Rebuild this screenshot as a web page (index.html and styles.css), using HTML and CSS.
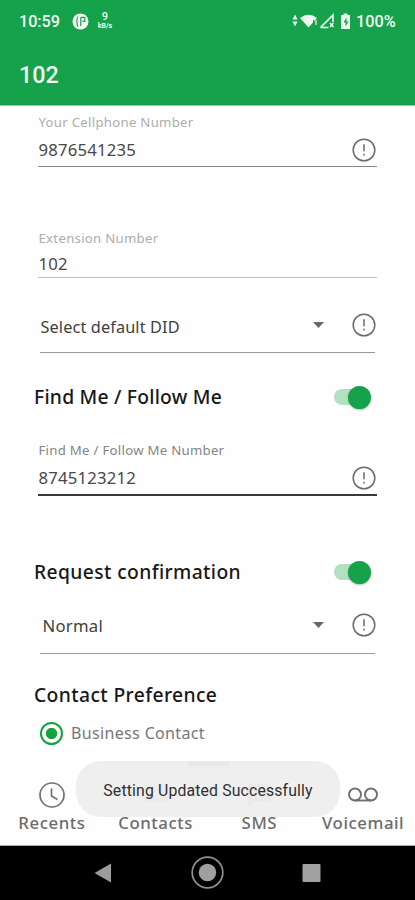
FILE: index.html
```html
<!DOCTYPE html>
<html lang="en">
<head>
<meta charset="utf-8">
<title>102</title>
<link rel="stylesheet" href="styles.css">
</head>
<body>
<svg class="defs" width="0" height="0">
  <symbol id="info" viewBox="0 0 24 24">
    <circle cx="12" cy="12" r="10.8" fill="none" stroke="#6c6c6c" stroke-width="1.5"/>
    <path d="M12 6.300v6.900M12 15.800v1.700" stroke="#606060" stroke-width="1.400"/>
  </symbol>
</svg>
<div class="screen">
  <header class="top">
    <div class="status">
      <span class="clock">10:59</span>
      <svg class="app-dot" width="17" height="17" viewBox="0 0 17 17"><circle cx="8.500" cy="8.500" r="8" fill="#f4fbf5"/><path d="M6 3.500c-1.500 2-1.500 8 0 10M8.800 13V4.300M8.800 4.300h4v4h-2.300" fill="none" stroke="#15a24a" stroke-width="1.200"/></svg>
      <span class="speed"><b>9</b><small>kB/s</small></span>
      <svg class="signals" width="62" height="18" viewBox="0 0 62 18" fill="#eefaf0">
        <path d="M0.500 7.500L3 2.500l2.500 5zM.5 9.500h5L3 14.500z"/>
        <path d="M8 6Q16.500 -0.500 25 6L16.500 15.500z"/>
        <path d="M21.500 8v7" stroke="#15a24a" stroke-width="1"/>
        <path d="M24 8v5" stroke="#eefaf0" stroke-width="1.200"/>
        <path d="M28.500 15.500L41 3v7M28.500 15.500h8" fill="none" stroke="#eefaf0" stroke-width="1.700"/>
        <path d="M38 11l3.500 4M41.500 11L38 15" stroke="#eefaf0" stroke-width="1.500"/>
        <path d="M49 3h2.500V1.500h4V3H58v14h-9z"/>
        <path d="M54.500 5.500L51.500 10.500h2v4l3-5h-2z" fill="#15a24a"/>
      </svg>
      <span class="battery">100%</span>
    </div>
    <h1 class="title">102</h1>
  </header>
  <main class="form">
    <section class="field cell">
      <label class="label pale">Your Cellphone Number</label>
      <div class="row"><span class="value">9876541235</span><svg class="info"><use href="#info"/></svg></div>
    </section>
    <section class="field ext">
      <label class="label pale">Extension Number</label>
      <div class="row"><span class="value">102</span></div>
    </section>
    <section class="select did">
      <span class="choice">Select default DID</span><i class="arrow"></i><svg class="info"><use href="#info"/></svg>
    </section>
    <section class="heading find"><h2>Find Me / Follow Me</h2><span class="toggle"><i></i></span></section>
    <section class="field follow">
      <label class="label">Find Me / Follow Me Number</label>
      <div class="row"><span class="value">8745123212</span><svg class="info"><use href="#info"/></svg></div>
    </section>
    <section class="heading request"><h2>Request confirmation</h2><span class="toggle"><i></i></span></section>
    <section class="select normal">
      <span class="choice">Normal</span><i class="arrow"></i><svg class="info"><use href="#info"/></svg>
    </section>
    <section class="heading pref"><h2>Contact Preference</h2></section>
    <section class="option"><span class="radio"></span><span>Business Contact</span></section>
  </main>
  <nav class="tabs">
    <div class="tab"><svg width="28" height="28" viewBox="0 0 28 28" fill="none" stroke="#737373" stroke-width="1.700"><circle cx="14" cy="15" r="12"/><path d="M13.500 8.500v7.500l6 3.500"/></svg><span>Recents</span></div>
    <div class="tab"><svg width="28" height="28" viewBox="0 0 28 28" fill="#737373"><circle cx="10" cy="9" r="4"/><circle cx="19" cy="9" r="4"/><path d="M2 22c0-9 16-9 16 0zM19 22h7c0-5-4-7-8-6.500z"/></svg><span>Contacts</span></div>
    <div class="tab"><svg width="28" height="28" viewBox="0 0 28 28" fill="#737373"><path d="M3 4h23v17H8l-5 5z"/></svg><span>SMS</span></div>
    <div class="tab"><svg width="32" height="28" viewBox="0 0 32 28" fill="none" stroke="#707070" stroke-width="1.900"><circle cx="8" cy="14.500" r="6"/><circle cx="24" cy="14.500" r="6"/><path d="M8 20.500h16"/></svg><span>Voicemail</span></div>
  </nav>
  <footer class="system">
    <svg width="415" height="54" viewBox="0 0 415 54"><path d="M94.500 27L111 17.500v19z" fill="#9c9c9c"/><circle cx="207.500" cy="26.500" r="15.300" fill="none" stroke="#929292" stroke-width="1.700"/><circle cx="207.500" cy="26.500" r="8.700" fill="#a0a0a0"/><rect x="302.500" y="18" width="18" height="18" rx="1" fill="#a0a0a0"/></svg>
  </footer>
  <div class="toast">Setting Updated Successfully</div>
  <div class="handle"></div>
</div>
</body>
</html>
```
FILE: styles.css
```css
* { box-sizing: border-box; }
body { margin: 0; background: #fefefe; font-family: "Noto Sans", "Open Sans", sans-serif; }
.defs { display: block; position: absolute; }
.screen { position: relative; width: 415px; height: 900px; overflow: hidden; display: flex; flex-direction: column; }
span, label, h2 { white-space: nowrap; }

.top { height: 105px; flex: none; background: #15a24a; color: #f2fbf3; font-family: Roboto, sans-serif; box-shadow: 0 1px 0 #8bcca0; }
.status { height: 42px; display: flex; align-items: center; padding: 0 19px; font-size: 16.3px; font-weight: 500; }
.clock { width: 53px; letter-spacing: -0.1px; }
.speed { display: flex; flex-direction: column; align-items: center; width: 16px; margin-left: 8px; }
.speed b { font-size: 11px; line-height: 11px; font-weight: 500; }
.speed small { font-size: 7px; line-height: 9px; font-weight: 700; }
.signals { margin-left: auto; }
.battery { margin-left: 2px; width: 40px; }
.title { margin: 17px 0 0 19px; font-size: 23.3px; line-height: 32px; font-weight: 500; }

.form { height: 660px; flex: none; padding: 0 38px 0 34px; overflow: hidden; }
.field { margin-left: 4px; border-bottom: 1px solid #888; }
.label { display: block; padding-left: 0.5px; font-size: 13.2px; line-height: 18px; letter-spacing: 0.28px; color: #858585; }
.pale { color: #adadad; }
.row { display: flex; align-items: center; justify-content: space-between; height: 24px; }
.value { padding: 0 0 2px 0.5px; font-size: 16.7px; letter-spacing: 0.2px; color: #484848; }
.info { width: 24px; height: 24px; flex: none; margin-right: 1px; }
.cell { height: 62px; padding-top: 8px; }
.cell .row { margin-top: 7px; }
.ext { height: 111px; padding-top: 62px; border-color: #c0c0c0; }
.ext .row { margin-top: 5px; }
.select { display: flex; align-items: center; margin: 0 2px 0 6px; border-bottom: 1px solid #979797; }
.choice { flex: 1; padding-left: 0.5px; font-size: 16.3px; letter-spacing: 0.12px; color: #404040; }
.select .info { margin: 0 -1px 0 0; }
.arrow { width: 11px; height: 6px; margin-right: 28px; background: #686868; clip-path: polygon(0 0, 100% 0, 50% 100%); }
.did { height: 75px; padding-top: 20px; }
.did .choice { padding-top: 4px; }
.heading { display: flex; align-items: center; justify-content: space-between; }
.heading h2 { margin: 0; font-size: 19.3px; line-height: 26px; font-weight: 500; letter-spacing: 0.38px; color: #181818; }
.heading.find h2 { letter-spacing: 0.22px; }
.toggle { position: relative; width: 37px; height: 24px; margin-right: 6px; display: flex; align-items: center; justify-content: flex-end; }
.toggle::before { content: ""; position: absolute; left: 0; top: 4px; width: 30px; height: 16px; border-radius: 8px; background: #b1e1c1; }
.toggle i { position: relative; width: 23px; height: 23px; border-radius: 50%; background: #15a24a; box-shadow: 0 1px 2px #0004; }
.find { height: 88px; }
.follow { height: 55px; border-bottom: 2px solid #383838; }
.follow .row { margin-top: 7px; }
.request { height: 78px; margin-top: 37px; }
.normal { height: 43px; padding-bottom: 14px; }
.normal .choice { padding-left: 2.5px; font-size: 16.7px; letter-spacing: 0.25px; }
.pref { height: 82px; }
.option { display: flex; align-items: center; height: 24px; margin: -15px 0 0 6px; font-size: 16px; letter-spacing: 0.35px; color: #777; }
.radio { width: 23px; height: 23px; margin-right: 8px; border: 2px solid #15a23a; border-radius: 50%; background: radial-gradient(circle, #15a23a 0 5.3px, transparent 6px); }

.tabs { height: 81px; flex: none; display: grid; grid-template-columns: repeat(4, 1fr); padding-top: 15px; background: #fefefe; border-bottom: 1px solid #aaa; }
.tab { display: flex; flex-direction: column; align-items: center; font-size: 16.8px; line-height: 30px; font-weight: 500; letter-spacing: 0.55px; color: #6c6c6c; }
.system { height: 54px; flex: none; background: #000; }
.system svg { display: block; }
.handle { position: absolute; left: 188px; top: 762px; width: 41px; height: 4px; background: #e7e7e7; }
.toast { position: absolute; left: 76px; top: 761px; width: 264px; height: 56px; padding-top: 2px; border-radius: 25px; background: rgba(238, 238, 238, 0.965); display: flex; align-items: center; justify-content: center; font-family: Roboto, sans-serif; font-size: 15.8px; letter-spacing: 0.15px; color: #303030; }
```
